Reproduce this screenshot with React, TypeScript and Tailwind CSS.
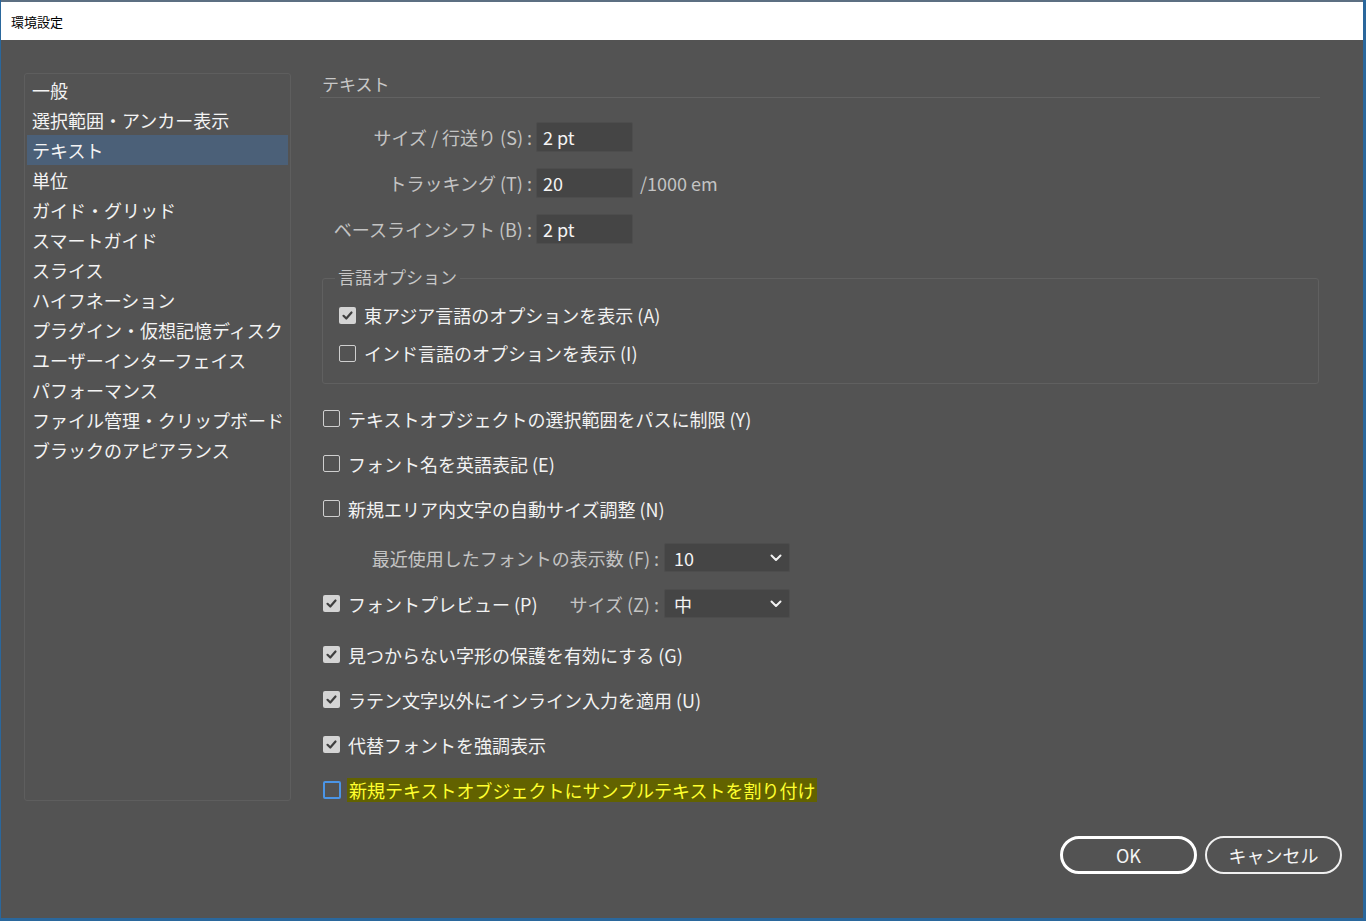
import React from "react";

const FONT = '"Meiryo UI","Noto Sans CJK JP","Noto Sans",sans-serif';

function CheckBox({ checked, focus }: { checked?: boolean; focus?: boolean }) {
  if (checked) {
    return (
      <div className="w-[17px] h-[17px] rounded-[2px] bg-[#d4d4d4] flex items-center justify-center shrink-0">
        <svg width="13" height="13" viewBox="0 0 13 13">
          <polyline points="2.5,6.8 5.3,9.5 10.5,3.5" fill="none" stroke="#3f3f3f" strokeWidth="2.2" strokeLinecap="round" strokeLinejoin="round" />
        </svg>
      </div>
    );
  }
  return (
    <div
      className={
        focus
          ? "w-[18px] h-[18px] rounded-[2px] border-2 border-[#4b95e6] shrink-0"
          : "w-[17px] h-[17px] rounded-[2px] border-[1.5px] border-[#cfcfcf] shrink-0"
      }
    />
  );
}

function Chevron() {
  return (
    <svg width="12" height="8" viewBox="0 0 12 8">
      <polyline points="1.5,1.5 6,6 10.5,1.5" fill="none" stroke="#f2f2f2" strokeWidth="2" strokeLinecap="round" strokeLinejoin="round" />
    </svg>
  );
}

function Select({ value }: { value: string }) {
  return (
    <div className="w-[126px] h-[29px] shrink-0 bg-[#454545] border border-[#4d4d4d] rounded-[2px] flex items-center justify-between pl-[9px] pr-[7px] text-[18px] text-[#f4f4f4] leading-none">
      <span>{value}</span>
      <Chevron />
    </div>
  );
}

function Input({ value }: { value: string }) {
  return (
    <div className="w-[97px] h-[30px] shrink-0 bg-[#454545] border border-[#4d4d4d] rounded-[2px] flex items-center pl-[6px] text-[18px] text-[#f4f4f4] leading-none">
      {value}
    </div>
  );
}

function CheckRow({ checked, label, focus }: { checked?: boolean; label: string; focus?: boolean }) {
  return (
    <div className="h-[45px] shrink-0 flex items-center gap-[8px]">
      <CheckBox checked={checked} focus={focus} />
      <span className="text-[18px] leading-none text-[#f2f2f2] whitespace-nowrap">{label}</span>
    </div>
  );
}

const items = [
  "一般",
  "選択範囲・アンカー表示",
  "テキスト",
  "単位",
  "ガイド・グリッド",
  "スマートガイド",
  "スライス",
  "ハイフネーション",
  "プラグイン・仮想記憶ディスク",
  "ユーザーインターフェイス",
  "パフォーマンス",
  "ファイル管理・クリップボード",
  "ブラックのアピアランス",
];

export default function App() {
  return (
    <div className="w-[1366px] h-[921px] bg-[#2a679c] pl-[1px] pr-[3px] pb-[3px] overflow-hidden" style={{ fontFamily: FONT }}>
      <div className="w-full h-full flex flex-col bg-[#535353]">
        <div className="h-[40px] shrink-0 bg-white border-t-2 border-[#5c6f82] flex items-center pl-[10px] text-[13px] text-black leading-none">
          環境設定
        </div>
        <div className="flex-1 flex flex-col pt-[33px]">
          <div className="flex h-[728px] shrink-0 items-start">
            <div className="ml-[23px] w-[267px] h-[728px] shrink-0 border border-[#5e5e5e] rounded-[3px] pt-[1px] px-[2px]">
              {items.map((it) => (
                <div
                  key={it}
                  className={
                    it === "テキスト"
                      ? "h-[30px] flex items-center pl-[5px] bg-[#4b6078] text-[18px] leading-none text-[#f4f4f4] whitespace-nowrap"
                      : "h-[30px] flex items-center pl-[5px] text-[18px] leading-none text-[#f4f4f4] whitespace-nowrap"
                  }
                >
                  {it}
                </div>
              ))}
            </div>
            <div className="ml-[29px] w-[1000px] shrink-0 flex flex-col">
              <div className="h-[25px] shrink-0 border-b border-[#626262] pl-[2px] text-[17px] leading-none text-[#c8c8c8] flex items-start pt-[2px]">
                テキスト
              </div>
              <div className="mt-[24px] shrink-0 flex flex-col gap-[16px]">
                <div className="flex items-center gap-[4px]">
                  <div className="w-[212px] text-right text-[18px] leading-none text-[#c4c4c4] whitespace-nowrap">サイズ / 行送り (S) :</div>
                  <Input value="2 pt" />
                </div>
                <div className="flex items-center gap-[4px]">
                  <div className="w-[212px] text-right text-[18px] leading-none text-[#c4c4c4] whitespace-nowrap">トラッキング (T) :</div>
                  <Input value="20" />
                  <span className="ml-[3px] text-[18px] leading-none text-[#c4c4c4]">/1000 em</span>
                </div>
                <div className="flex items-center gap-[4px]">
                  <div className="w-[212px] text-right text-[18px] leading-none text-[#c4c4c4] whitespace-nowrap">ベースラインシフト (B) :</div>
                  <Input value="2 pt" />
                </div>
              </div>
              <div className="relative shrink-0 mt-[34px] ml-[2px] w-[997px] h-[106px] border border-[#606060] rounded-[3px] pt-[17px] pl-[16px]">
                <span className="absolute left-[12px] top-[-11px] px-[3px] bg-[#535353] text-[17px] leading-none text-[#c8c8c8]">言語オプション</span>
                <div className="h-[38px] flex items-center gap-[8px]">
                  <CheckBox checked />
                  <span className="text-[18px] leading-none text-[#f2f2f2]">東アジア言語のオプションを表示 (A)</span>
                </div>
                <div className="h-[38px] flex items-center gap-[8px]">
                  <CheckBox />
                  <span className="text-[18px] leading-none text-[#f2f2f2]">インド言語のオプションを表示 (I)</span>
                </div>
              </div>
              <div className="mt-[12px] ml-[3px] shrink-0 flex flex-col">
                <CheckRow label="テキストオブジェクトの選択範囲をパスに制限 (Y)" />
                <CheckRow label="フォント名を英語表記 (E)" />
                <CheckRow label="新規エリア内文字の自動サイズ調整 (N)" />
                <div className="h-[53px] w-[467px] shrink-0 flex items-center gap-[5px]">
                  <div className="flex-1 text-right text-[18px] leading-none text-[#c4c4c4] whitespace-nowrap">最近使用したフォントの表示数 (F) :</div>
                  <Select value="10" />
                </div>
                <div className="h-[39px] w-[467px] shrink-0 flex items-center gap-[5px]">
                  <div className="flex-1 flex items-center justify-between">
                    <div className="flex items-center gap-[8px]">
                      <CheckBox checked />
                      <span className="text-[18px] leading-none text-[#f2f2f2] whitespace-nowrap">フォントプレビュー (P)</span>
                    </div>
                    <span className="text-[18px] leading-none text-[#c4c4c4] whitespace-nowrap">サイズ (Z) :</span>
                  </div>
                  <Select value="中" />
                </div>
                <div className="h-[9px] shrink-0" />
                <CheckRow checked label="見つからない字形の保護を有効にする (G)" />
                <CheckRow checked label="ラテン文字以外にインライン入力を適用 (U)" />
                <CheckRow checked label="代替フォントを強調表示" />
                <div className="h-[45px] shrink-0 flex items-center gap-[6px]">
                  <CheckBox focus />
                  <span className="bg-[#626200] h-[24px] flex items-center px-[2px] text-[18px] leading-none text-[#ffff2e] whitespace-nowrap">新規テキストオブジェクトにサンプルテキストを割り付け</span>
                </div>
              </div>
            </div>
          </div>
          <div className="mt-[35px] flex justify-end gap-[8px] pr-[21px]">
            <button className="w-[137px] h-[38px] rounded-full border-[3px] border-white text-[18px] leading-none text-[#f4f4f4] flex items-center justify-center">OK</button>
            <button className="w-[137px] h-[38px] rounded-full border-2 border-[#f0f0f0] text-[18px] leading-none text-[#f4f4f4] flex items-center justify-center">キャンセル</button>
          </div>
        </div>
      </div>
    </div>
  );
}
